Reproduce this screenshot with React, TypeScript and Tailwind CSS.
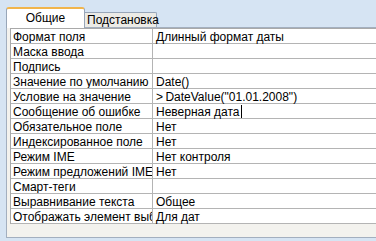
const rows: [string, string][] = [
  ["Формат поля", "Длинный формат даты"],
  ["Маска ввода", ""],
  ["Подпись", ""],
  ["Значение по умолчанию", "Date()"],
  ["Условие на значение", ">\u2009DateValue(\"01.01.2008\")"],
  ["Сообщение об ошибке", "Неверная дата"],
  ["Обязательное поле", "Нет"],
  ["Индексированное поле", "Нет"],
  ["Режим IME", "Нет контроля"],
  ["Режим предложений IME", "Нет"],
  ["Смарт-теги", ""],
  ["Выравнивание текста", "Общее"],
  ["Отображать элемент выбора даты", "Для дат"],
];

export default function App() {
  return (
    <div
      className="w-[376px] h-[241px] overflow-hidden bg-[#d6e4f3] pl-[6px] pt-[7px] text-[12px] leading-[14px] text-black"
      style={{ fontFamily: "'Liberation Sans', Arial, sans-serif" }}
    >
      {/* Tabs */}
      <div className="flex items-end h-[20px]">
        <div className="relative z-10 w-[79px] h-[21px] -mb-px bg-white border border-[#98a6b8] border-b-0 border-t-2 border-t-[#f1b54d] rounded-t-[3px] text-center pt-[2px]">
          Общие
        </div>
        <div className="w-[72px] h-[15px] bg-[#ecebe6] border border-[#98a6b8] border-b-0 border-l-0 rounded-tr-[2px] pl-[2px] leading-[14px]">
          Подстановка
        </div>
      </div>

      {/* Panel */}
      <div className="h-[211px] bg-[#f3f2ee] border border-r-0 border-[#a3afbf] pl-[3px] overflow-hidden">
        <div className="w-[420px] border-t border-l border-[#a9a9a9]">
          {rows.map(([label, value], i) => (
            <div key={i} className="flex h-[15px] border-b border-[#b4b4b4] bg-white pt-[1px]">
              <div className="w-[142px] shrink-0 border-r border-[#b4b4b4] -mt-[1px] pt-[1px] pl-[2px] whitespace-nowrap overflow-hidden">
                {label}
              </div>
              <div className="flex-1 pl-[3px] whitespace-nowrap flex items-start">
                {value}
                {i === 5 && <span className="inline-block w-px h-[13px] bg-black ml-[1px]" />}
              </div>
            </div>
          ))}
        </div>
      </div>
    </div>
  );
}
